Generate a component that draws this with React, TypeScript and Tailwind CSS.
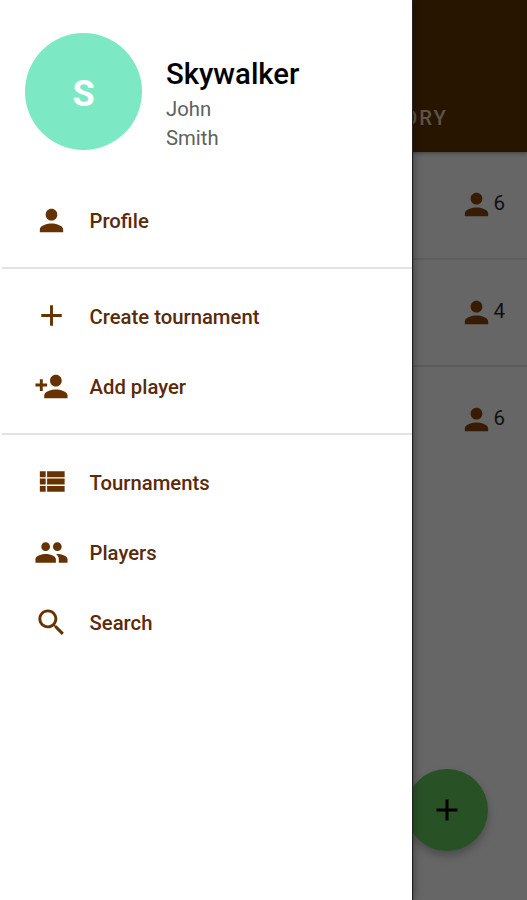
import type { ReactNode } from "react";

const paths = {
  person:
    "M12 12c2.21 0 4-1.79 4-4s-1.79-4-4-4-4 1.79-4 4 1.79 4 4 4zm0 2c-2.67 0-8 1.34-8 4v2h16v-2c0-2.66-5.33-4-8-4z",
  add: "M19 13h-6v6h-2v-6H5v-2h6V5h2v6h6v2z",
  personAdd:
    "M15 12c2.21 0 4-1.79 4-4s-1.79-4-4-4-4 1.79-4 4 1.79 4 4 4zm-9-2V7H4v3H1v2h3v3h2v-3h3v-2H6zm9 4c-2.67 0-8 1.34-8 4v2h16v-2c0-2.66-5.33-4-8-4z",
  list: "M4 14h4v-4H4v4zm0 5h4v-4H4v4zM4 9h4V5H4v4zm5 5h12v-4H9v4zm0 5h12v-4H9v4zM9 5v4h12V5H9z",
  people:
    "M16 11c1.66 0 2.99-1.34 2.99-3S17.66 5 16 5c-1.66 0-3 1.34-3 3s1.34 3 3 3zm-8 0c1.66 0 2.99-1.34 2.99-3S9.66 5 8 5C6.34 5 5 6.34 5 8s1.34 3 3 3zm0 2c-2.33 0-7 1.17-7 3.5V19h14v-2.5c0-2.33-4.67-3.5-7-3.5zm8 0c-.29 0-.62.02-.97.05 1.16.84 1.97 1.97 1.97 3.45V19h6v-2.5c0-2.33-4.67-3.5-7-3.5z",
  search:
    "M15.5 14h-.79l-.28-.27C15.41 12.59 16 11.11 16 9.5 16 5.91 13.09 3 9.5 3S3 5.91 3 9.5 5.91 16 9.5 16c1.61 0 3.09-.59 4.23-1.57l.27.28v.79l5 4.99L20.49 19l-4.99-5zm-6 0C7.01 14 5 11.99 5 9.5S7.01 5 9.5 5 14 7.01 14 9.5 11.99 14 9.5 14z",
};

type IconName = keyof typeof paths;

const groups: { icon: IconName; label: string }[][] = [
  [{ icon: "person", label: "Profile" }],
  [
    { icon: "add", label: "Create tournament" },
    { icon: "personAdd", label: "Add player" },
  ],
  [
    { icon: "list", label: "Tournaments" },
    { icon: "people", label: "Players" },
    { icon: "search", label: "Search" },
  ],
];

const playerCounts = [6, 4, 6];

function Icon({ name, className }: { name: IconName; className: string }) {
  return (
    <svg viewBox="0 0 24 24" fill="currentColor" className={className}>
      <path d={paths[name]} />
    </svg>
  );
}

function MenuGroup({ children }: { children: ReactNode }) {
  return (
    <ul className="ml-0.5 border-b-2 border-[#e2e2e2] pb-[11.6px] pt-3 last:border-b-0">
      {children}
    </ul>
  );
}

function Drawer() {
  return (
    <aside className="z-10 w-[412px] shrink-0 bg-white shadow-[1px_0_1px_#222,2px_0_8px_rgba(0,0,0,0.3)]">
      <header className="flex h-[173px] gap-6 pl-[25px] pt-[33px]">
        <div className="flex size-[117px] items-center justify-center rounded-full bg-[#7ce9c4] pt-1 text-[36px] font-bold text-white">
          S
        </div>
        <div className="pt-[23px]">
          <h1 className="mb-0.5 text-[29.3px] font-medium leading-[37px] text-black">Skywalker</h1>
          <p className="text-[20.3px] leading-[28.5px] text-[#606060]">John</p>
          <p className="text-[20.3px] leading-[28.5px] text-[#606060]">Smith</p>
        </div>
      </header>

      <nav>
        {groups.map((items, i) => (
          <MenuGroup key={i}>
            {items.map((item) => (
              <li key={item.label}>
                <button className="flex h-[70.2px] w-full items-center pl-[31.5px] text-[#663300]">
                  <Icon name={item.icon} className="size-[35px]" />
                  <span className="ml-[21px] pt-0.5 text-[20.3px] font-medium text-[#5a2a0c]">
                    {item.label}
                  </span>
                </button>
              </li>
            ))}
          </MenuGroup>
        ))}
      </nav>
    </aside>
  );
}

export default function App() {
  return (
    <div className="flex h-[900px] w-[527px] overflow-hidden bg-[#666] font-['Roboto',sans-serif]">
      <Drawer />

      <main className="relative min-w-0 flex-1">
        <div className="flex h-[152px] items-end justify-end bg-[#281500] pb-5 pr-[79px] shadow-[0_1px_4px_rgba(0,0,0,0.4)]">
          <span className="text-[20.3px] font-medium leading-7 tracking-[2px] text-[#5f5348]">
            HISTORY
          </span>
        </div>

        {playerCounts.map((count, i) => (
          <div
            key={i}
            className="flex h-[107.5px] justify-end border-b-2 border-[#5c5c5c] pr-[22px] pt-[35px] last-of-type:border-b-0"
          >
            <Icon name="person" className="mr-[-0.5px] size-[35px] text-[#371b05]" />
            <span className="text-[20.5px] leading-8 text-[#111]">{count}</span>
          </div>
        ))}

        <button className="absolute left-[-6px] top-[769px] flex size-[82px] items-center justify-center rounded-full bg-[#295126] text-black shadow-[0_5px_8px_rgba(0,0,0,0.25)]">
          <Icon name="add" className="size-[36px]" />
        </button>
      </main>
    </div>
  );
}
